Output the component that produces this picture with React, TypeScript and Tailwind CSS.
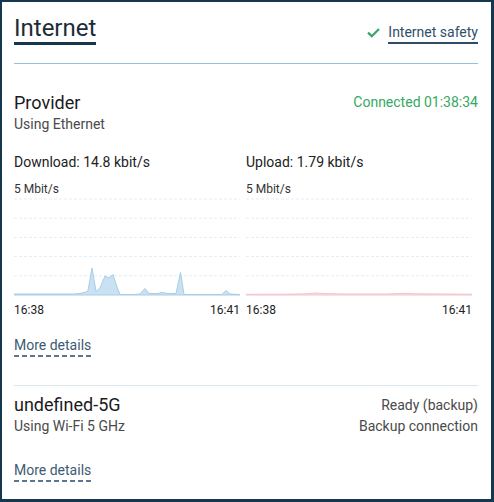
import React from "react";

type Pt = [number, number];

const H = 100;
const BASE = 98;
const GRID = [2, 21.2, 40.4, 59.6, 78.8];

// download trace, x in px from chart left, y in px from chart top
const download: Pt[] = [
  [0, 97], [60, 97], [66, 96.5], [72, 95], [74, 93.5], [78, 71], [82, 94.5], [86, 91],
  [91, 79], [95, 81], [99, 77.5], [103, 90], [106, 97.5], [120, 97.5], [126, 97],
  [131, 91.5], [135, 96.5], [144, 96.5], [148, 95.5], [154, 96.5], [162, 96.5],
  [166.5, 75.5], [170, 97.5], [208, 97.5], [212, 93.5], [216, 97], [226, 97.5],
];

const upload: Pt[] = [
  [0, 97.3], [40, 97.2], [60, 96.8], [70, 96], [78, 96.6], [100, 97], [140, 97],
  [160, 96.3], [168, 96.8], [200, 97], [226, 97.2],
];

const Chart = ({ data, fill, stroke }: { data: Pt[]; fill: string; stroke: string }) => {
  const w = 226;
  const line = data.map(([x, y]) => `${x},${y}`).join(" ");
  const area = `0,${BASE} ${line} ${w},${BASE}`;
  return (
    <svg width={w} height={H} viewBox={`0 0 ${w} ${H}`} className="block">
      {GRID.map((y) => (
        <line key={y} x1={0} x2={w} y1={y} y2={y} stroke="#e2edf5" strokeWidth={1} strokeDasharray="3 2" />
      ))}
      <polygon points={area} fill={fill} />
      <polyline points={line} fill="none" stroke={stroke} strokeWidth={1} />
      <line x1={0} x2={w} y1={BASE} y2={BASE} stroke={stroke} strokeWidth={1} />
    </svg>
  );
};

const MoreDetails = () => (
  <div className="inline-flex flex-col text-[14px] leading-[19px] text-[#3d5b75]">
    <span>More details</span>
    <span className="h-[2px] w-full bg-[repeating-linear-gradient(to_right,#5a7690_0_5px,transparent_5px_8px)]" />
  </div>
);

const Traffic = ({ label, data, fill, stroke }: { label: string; data: Pt[]; fill: string; stroke: string }) => (
  <div className="flex flex-col">
    <div className="text-[14px] leading-[20px] text-[#222]">{label}</div>
    <div className="mt-[9px] text-[12px] leading-[16px] text-[#333]">5 Mbit/s</div>
    <Chart data={data} fill={fill} stroke={stroke} />
    <div className="mt-[5px] flex w-[226px] justify-between text-[12px] leading-[16px] text-[#222]">
      <span>16:38</span>
      <span>16:41</span>
    </div>
  </div>
);

export default function App() {
  return (
    <div
      className="h-[502px] w-[494px] overflow-hidden border-l-2 border-t-2 border-r-[3px] border-b-[3px] border-[#15384f] bg-white pl-3 pr-[13px] pt-[13px]"
      style={{ fontFamily: "Roboto, 'Noto Sans', sans-serif" }}
    >
      {/* header */}
      <div className="flex items-end justify-between">
        <h1 className="border-b-[3px] border-[#15384f] text-[24px] leading-[27px] font-normal text-[#1d2b38]">
          Internet
        </h1>
        <div className="mb-[1px] flex items-center gap-[8px]">
          <svg width="13" height="10" viewBox="0 0 13 10" className="mt-[-2px]">
            <polyline points="1,4.6 4.8,8.2 12,1" fill="none" stroke="#3aa76d" strokeWidth="2.3" />
          </svg>
          <span className="border-b-2 border-[#2c4d68] text-[14px] leading-[19px] text-[#2f4f6b]">
            Internet safety
          </span>
        </div>
      </div>
      <div className="mt-[18px] h-px bg-[#93c1df]" />

      {/* provider */}
      <div className="mt-[28px] flex items-start justify-between">
        <div>
          <div className="text-[18px] leading-[22px] text-[#1b1b1b]">Provider</div>
          <div className="text-[14px] leading-[20px] text-[#4a4a4a]">Using Ethernet</div>
        </div>
        <div className="text-[14px] leading-[20px] text-[#36a862]">Connected 01:38:34</div>
      </div>

      <div className="mt-[18px] grid grid-cols-2">
        <Traffic label="Download: 14.8 kbit/s" data={download} fill="#c9e2f3" stroke="#a9cde6" />
        <Traffic label="Upload: 1.79 kbit/s" data={upload} fill="#fbe3e7" stroke="#f3c3cc" />
      </div>

      <div className="mt-[15px]">
        <MoreDetails />
      </div>

      <div className="mt-[28px] h-px bg-[#dbe7ef]" />

      {/* backup */}
      <div className="mt-[8px] flex items-start justify-between">
        <div>
          <div className="text-[18px] leading-[22px] text-[#1b1b1b]">undefined-5G</div>
          <div className="text-[14px] leading-[20px] text-[#4a4a4a]">Using Wi-Fi 5 GHz</div>
        </div>
        <div className="text-right">
          <div className="text-[14px] leading-[22px] text-[#4a4a4a]">Ready (backup)</div>
          <div className="text-[14px] leading-[20px] text-[#4a4a4a]">Backup connection</div>
        </div>
      </div>

      <div className="mt-[22px]">
        <MoreDetails />
      </div>
    </div>
  );
}
